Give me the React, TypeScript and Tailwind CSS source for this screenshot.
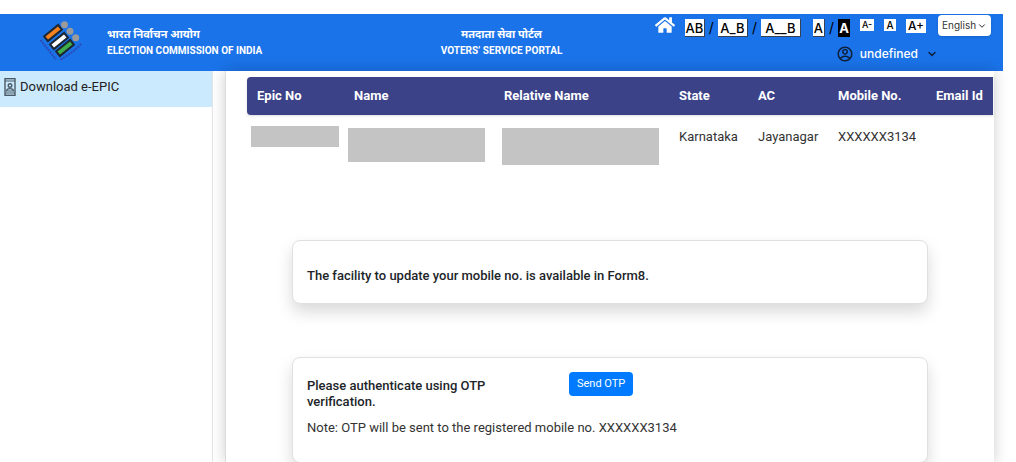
import React from 'react';
import { ChevronDown } from 'lucide-react';
import { FaHome } from 'react-icons/fa';
import { RiAccountCircleLine } from 'react-icons/ri';

const EciLogo: React.FC = () => (
    <svg viewBox="0 0 44 44" className="w-11 h-11" aria-hidden="true">
        <g stroke="#1c2733" strokeWidth="2">
            <rect x="5" y="9" width="18" height="6" fill="#f5821f" transform="rotate(-39 14 12)" />
            <rect x="11" y="17" width="18" height="6" fill="#ffffff" transform="rotate(-39 20 20)" />
            <rect x="17" y="24" width="18" height="6" fill="#3fae49" transform="rotate(-39 26 27)" />
        </g>
        <circle cx="25.500" cy="3.800" r="3.5" fill="#9a9a9a" />
        <circle cx="31" cy="10.200" r="3.5" fill="#9a9a9a" />
        <circle cx="36.700" cy="16.800" r="3.5" fill="#9a9a9a" />
        <path d="M1.500 19 L17 38.500" stroke="#2b49b8" strokeWidth="2" strokeDasharray="2 1" fill="none" />
        <path d="M21.500 38.500 Q34 32 42.500 22.500" stroke="#2b49b8" strokeWidth="2" strokeDasharray="2 1" fill="none" />
    </svg>
);

const EpicIcon: React.FC = () => (
    <svg viewBox="0 0 12 18" className="w-3 h-[18px] shrink-0" fill="none" stroke="#4a5a66" aria-hidden="true">
        <rect x="1" y="0.700" width="10" height="16.600" strokeWidth="1.400" />
        <path d="M1 3h10M1 15h10" strokeWidth="1.200" />
        <circle cx="6" cy="7.500" r="1.800" strokeWidth="1.400" />
        <path d="M2.500 13c0-1.500 1.500-2.300 3.500-2.300s3.500.8 3.500 2.300z" strokeWidth="1.200" />
    </svg>
);

const ToolButton: React.FC<{ label: string; text: string; className: string }> = ({ label, text, className }) => (
    <button type="button" aria-label={label} className={className}>
        {text}
    </button>
);

const spacingBtn = 'h-[18px] bg-white text-black text-[13px] leading-[18px] font-medium border-r border-b border-gray-700';
const sizeBtn = 'bg-white text-black font-medium';

const Header: React.FC = () => (
    <header className="h-[57px] shrink-0 bg-[#1a73e8] text-white grid grid-cols-[1fr_auto_1fr]">
        <div className="flex items-center gap-6 pl-[39px]">
            <EciLogo />
            <div className="text-[10px] leading-4 font-bold whitespace-nowrap">
                <p className="text-[11px] leading-4">भारत निर्वाचन आयोग</p>
                <p>ELECTION COMMISSION OF INDIA</p>
            </div>
        </div>

        <div className="flex flex-col justify-center text-center text-[10px] leading-4 font-bold whitespace-nowrap">
            <p className="text-[11px] leading-4">मतदाता सेवा पोर्टल</p>
            <p>VOTERS’ SERVICE PORTAL</p>
        </div>

        <div className="flex flex-col items-end pt-px pr-3 font-[Inter,sans-serif]">
            <div className="flex items-start">
                <a href="#" aria-label="Home" className="mr-2.5">
                    <FaHome size={20} />
                </a>
                <div className="flex items-center gap-1 pt-1 text-black text-sm leading-[18px]">
                    <ToolButton label="Normal spacing" text="AB" className={`${spacingBtn} w-5`} />
                    <span>/</span>
                    <ToolButton label="Wide spacing" text="A_B" className={`${spacingBtn} w-[30px]`} />
                    <span>/</span>
                    <ToolButton label="Wider spacing" text="A__B" className={`${spacingBtn} w-10`} />
                </div>
                <div className="flex items-center gap-1 pt-1 pl-3 text-black text-sm leading-[18px]">
                    <ToolButton label="Light theme" text="A" className={`${spacingBtn} w-3`} />
                    <span>/</span>
                    <ToolButton label="Dark theme" text="A" className="w-3 h-[18px] bg-black text-white text-[13px] leading-[18px] font-bold" />
                </div>
                <div className="flex items-start gap-2.5 pt-1 pl-2.5">
                    <ToolButton label="Smaller text" text="A-" className={`${sizeBtn} w-3.5 h-3 text-[9px] leading-3`} />
                    <ToolButton label="Default text" text="A" className={`${sizeBtn} w-3 h-3 text-[10px] leading-3`} />
                    <ToolButton label="Larger text" text="A+" className={`${sizeBtn} w-5 h-3.5 text-xs leading-[14px]`} />
                </div>
                <div className="relative ml-3">
                    <select
                        aria-label="Language"
                        className="block appearance-none w-[53px] h-[21px] pl-1 rounded bg-white text-[#333] text-[10px] leading-[21px] shadow"
                    >
                        <option>English</option>
                    </select>
                    <ChevronDown size={10} className="absolute right-1 top-1.5 text-black pointer-events-none" />
                </div>
            </div>
            <button type="button" className="flex items-center mr-[53px] mt-2 text-xs leading-4 font-medium">
                <RiAccountCircleLine size={18} className="text-[#10203a] mr-1.5" />
                undefined
                <ChevronDown size={12} strokeWidth={3} className="text-[#10203a] ml-2" />
            </button>
        </div>
    </header>
);

const Redacted: React.FC<{ className: string }> = ({ className }) => (
    <div className={`bg-[#c4c4c4] ${className}`}></div>
);

const VoterTable: React.FC = () => (
    <table className="w-full table-fixed text-left text-[13px] leading-5">
        <colgroup>
            <col className="w-[97px]" />
            <col className="w-[150px]" />
            <col />
            <col className="w-[79px]" />
            <col className="w-20" />
            <col className="w-[98px]" />
            <col className="w-[67px]" />
        </colgroup>
        <thead className="text-white whitespace-nowrap">
            <tr className="h-[38px] bg-[#3b4288] shadow">
                <th className="pl-2.5 font-bold rounded-l">Epic No</th>
                <th className="pl-2.5 font-bold">Name</th>
                <th className="pl-2.5 font-bold">Relative Name</th>
                <th className="pl-2.5 font-bold">State</th>
                <th className="pl-2.5 font-bold">AC</th>
                <th className="pl-2.5 font-bold">Mobile No.</th>
                <th className="pl-2.5 font-bold">Email Id</th>
            </tr>
        </thead>
        <tbody>
            <tr className="align-top">
                <td className="pl-1 pt-[11px]"><Redacted className="w-[88px] h-[21px]" /></td>
                <td className="pl-1 pt-[13px]"><Redacted className="w-[137px] h-[34px]" /></td>
                <td className="pl-2 pt-[13px]"><Redacted className="w-[157px] h-[37px]" /></td>
                <td className="pl-2.5 pt-3">Karnataka</td>
                <td className="pl-2.5 pt-3">Jayanagar</td>
                <td className="pl-2.5 pt-3">XXXXXX3134</td>
                <td></td>
            </tr>
        </tbody>
    </table>
);

const Card: React.FC<{ className: string; children: React.ReactNode }> = ({ className, children }) => (
    <section className={`mx-[66px] px-3.5 bg-white rounded-lg border border-[#e0e0e0] shadow-[0_8px_16px_rgba(0,0,0,0.15)] ${className}`}>
        {children}
    </section>
);

const App: React.FC = () => {
    return (
        <div className="h-screen overflow-hidden flex flex-col bg-white pt-3.5 pr-[13px] text-[#333] font-[Roboto,'Noto_Sans',sans-serif]">
            <Header />

            <div className="flex grow">
                {/* Sidebar */}
                <nav className="w-[213px] shrink-0 border-r border-[#e6e6e6]">
                    <a href="#" className="flex items-start h-9 pl-1 pt-[7px] gap-1 bg-[#cbeafe] text-[13px] leading-[18px] text-[#222]">
                        <EpicIcon />
                        Download e-EPIC
                    </a>
                </nav>

                {/* Details panel */}
                <main className="grow ml-3 mr-[9px] pt-1.5 border-l border-[#dcdcdc] shadow-[0_0_14px_rgba(0,0,0,0.2)]">
                    <div className="pl-[21px] pr-px">
                        <VoterTable />
                    </div>

                    <Card className="mt-[75px] pt-6 pb-4">
                        <p className="text-[13px] leading-[22px] font-medium text-[#212529]">
                            The facility to update your mobile no. is available in Form8.
                        </p>
                    </Card>

                    <Card className="mt-[53px] pt-3.5 pb-6">
                        <div className="flex items-start">
                            <p className="w-[262px] pr-8 pt-1.5 text-[13px] leading-4 font-medium text-[#212529]">
                                Please authenticate using OTP verification.
                            </p>
                            <button type="button" className="h-6 px-2 rounded-sm bg-[#007bff] text-white text-[11px]">
                                Send OTP
                            </button>
                        </div>
                        <p className="mt-2 text-[13px] leading-5">
                            Note: OTP will be sent to the registered mobile no. XXXXXX3134
                        </p>
                    </Card>
                </main>
            </div>
        </div>
    );
};

export default App;
